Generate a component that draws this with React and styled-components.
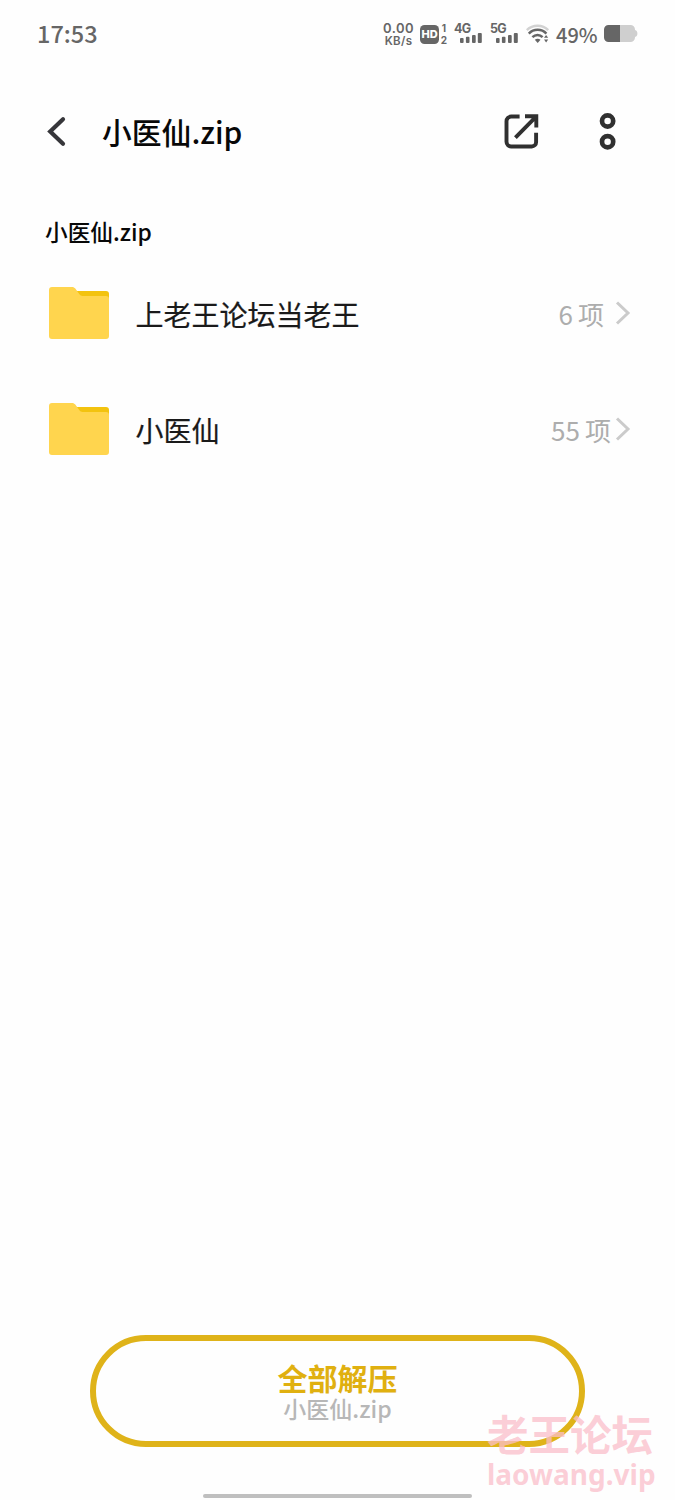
import React from 'react';
import styled, { createGlobalStyle } from 'styled-components';

const entries = [
  { id: 1, name: '上老王论坛当老王', count: 6 },
  { id: 2, name: '小医仙', count: 55 },
];

const BackIcon = () => (
  <svg width="20" height="32" viewBox="0 0 20 32" fill="none">
    <path d="M17 3.2L4.200 15.500 17 27.800" stroke="#36363a" strokeWidth="4.2" strokeLinecap="round" />
  </svg>
);

const OpenIcon = () => (
  <svg width="36" height="36" viewBox="0 0 36 36" fill="none" stroke="#303030" strokeWidth="3.9">
    <path d="M15.6 2.5H7.2A4.7 4.7 0 0 0 2.5 7.2v20.6a4.7 4.7 0 0 0 4.7 4.7h20.6a4.3 4.3 0 0 0 4.3-4.3v-9.4" />
    <path d="M21 2.2h11.3v11.2M31.6 3.2L11.4 23.6" />
  </svg>
);

const MoreIcon = () => (
  <svg width="18" height="38" viewBox="0 0 18 38" fill="none" stroke="#303030" strokeWidth="4.7">
    <circle cx="8.6" cy="8" r="5.6" />
    <circle cx="8.6" cy="28.7" r="5.6" />
  </svg>
);

const FolderIcon = () => (
  <svg width="60" height="52" viewBox="0 0 60 52">
    <path d="M22 4h35a3 3 0 0 1 3 3v8H22z" fill="#f3c30f" />
    <path
      d="M3 0h20c1.500 0 2.400.500 3.300 1.600l4.100 5.600c.8 1.100 1.700 1.700 3.200 1.700H57a3 3 0 0 1 3 3V49a3 3 0 0 1-3 3H3a3 3 0 0 1-3-3V3a3 3 0 0 1 3-3z"
      fill="#ffd54e"
    />
  </svg>
);

const ChevronIcon = () => (
  <svg width="16" height="26" viewBox="0 0 16 26" fill="none">
    <path d="M2 2.5L13 13 2 23.5" stroke="#cbcbcb" strokeWidth="3" />
  </svg>
);

const SignalBars = () => (
  <svg width="22" height="10" viewBox="0 0 22 10" fill="#666">
    <rect x="0" y="5" width="3.6" height="5" rx="1" />
    <rect x="5.9" y="3.7" width="3.6" height="6.3" rx="1" />
    <rect x="12" y="2" width="3.7" height="8" rx="1" />
    <rect x="17.8" y="0" width="4" height="10" rx="1" />
  </svg>
);

const WifiIcon = () => (
  <svg width="24" height="20" viewBox="0 0 24 20" fill="none" strokeWidth="2.5">
    <path d="M.8 6.200C6.800.400 16.500.400 22.200 6.200" stroke="#d2d2d2" />
    <path d="M2.800 9.600c4.900-5 12.800-5 17.600 0M6.400 13.200c3-2.900 7.300-2.900 10.200 0" stroke="#666" />
    <path d="M8.800 15.800c1.700-1.400 4-1.400 5.700 0L11.700 18.900z" fill="#666" />
    <path d="M18 13.800l2.100-2.800 2.100 2.800zM18 15.600l2.100 2.800 2.100-2.800z" fill="#666" />
  </svg>
);

const BatteryIcon = () => (
  <svg width="34" height="18" viewBox="0 0 34 18">
    <path
      d="M16 0h10.500a4.500 4.500 0 0 1 4.500 4.500v.5c1.700.6 2.400 1.700 2.400 3.500s-.7 2.900-2.400 3.500v.5a4.500 4.500 0 0 1-4.500 4.500H16z"
      fill="#cfcfcf"
    />
    <path d="M4.500 0H16v17H4.500A4.500 4.500 0 0 1 0 12.500v-8A4.500 4.500 0 0 1 4.500 0z" fill="#666" />
  </svg>
);

const StatusBar = () => (
  <Status>
    <Clock>17:53</Clock>
    <Speed>
      <span>0.00</span>
      <small>KB/s</small>
    </Speed>
    <HdBadge>HD</HdBadge>
    <SimNumbers>
      <span>1</span>
      <span>2</span>
    </SimNumbers>
    <Network>
      <span>4G</span>
      <SignalBars />
    </Network>
    <Network>
      <span>5G</span>
      <SignalBars />
    </Network>
    <Wifi>
      <WifiIcon />
    </Wifi>
    <Percent>49%</Percent>
    <BatteryIcon />
  </Status>
);

const App = () => (
  <Screen>
    <GlobalStyle />
    <StatusBar />
    <Header>
      <IconButton $width={20}>
        <BackIcon />
      </IconButton>
      <Title>小医仙.zip</Title>
      <IconButton $width={36}>
        <OpenIcon />
      </IconButton>
      <IconButton $width={18}>
        <MoreIcon />
      </IconButton>
    </Header>
    <PathLabel>小医仙.zip</PathLabel>
    <List>
      {entries.map((entry) => (
        <Row key={entry.id}>
          <FolderIcon />
          <Name>{entry.name}</Name>
          <Count $gap={entry.count > 9 ? 4 : 11}>
            <b>{entry.count}</b>
            <span>项</span>
          </Count>
          <ChevronIcon />
        </Row>
      ))}
    </List>
    <ExtractButton>
      <strong>全部解压</strong>
      <span>小医仙.zip</span>
    </ExtractButton>
    <HomeBar />
    <Watermark>
      <strong>老王论坛</strong>
      <span>laowang.vip</span>
    </Watermark>
  </Screen>
);

export default App;

const GlobalStyle = createGlobalStyle`
  * {
    box-sizing: border-box;
  }
  body {
    margin: 0;
    background: #fefefe;
    font-family: 'Noto Sans CJK SC', sans-serif;
  }
  svg {
    display: block;
    flex-shrink: 0;
  }
`;

const Screen = styled.div`
  position: relative;
  width: 675px;
  height: 1500px;
  display: flex;
  flex-direction: column;
  overflow: hidden;
  background: #fefefe;
`;

const Status = styled.div`
  height: 68px;
  display: flex;
  align-items: center;
  padding: 0 37px;
  color: #666;
  font-weight: 500;
`;

const Clock = styled.div`
  flex: 1;
  padding-bottom: 2px;
  font-size: 23.5px;
  line-height: 30px;
`;

const Speed = styled.div`
  width: 33px;
  display: flex;
  flex-direction: column;
  align-items: center;
  font-family: Inter, sans-serif;
  font-size: 13px;
  font-weight: 600;
  line-height: 13px;
  letter-spacing: 0.5px;
  small {
    font-size: 11.5px;
    line-height: 12px;
    letter-spacing: 0.3px;
  }
`;

const HdBadge = styled.div`
  width: 19px;
  height: 19px;
  margin-left: 5px;
  border-radius: 4.5px;
  background: #666;
  color: #fefefe;
  font-family: Inter, sans-serif;
  font-size: 11px;
  font-weight: 800;
  line-height: 19px;
  text-align: center;
`;

const SimNumbers = styled.div`
  width: 8px;
  margin-left: 1px;
  display: flex;
  flex-direction: column;
  align-items: center;
  font-family: Inter, sans-serif;
  font-size: 10px;
  font-weight: 700;
  line-height: 12px;
`;

const Network = styled.div`
  width: 28px;
  height: 19px;
  margin: 0 0 1px 6px;
  display: flex;
  flex-direction: column;
  justify-content: space-between;
  font-family: Inter, sans-serif;
  font-size: 12.5px;
  font-weight: 700;
  line-height: 9px;
  & + & {
    margin-left: 8px;
  }
  span {
    letter-spacing: -0.8px;
  }
  svg {
    align-self: flex-end;
  }
`;

const Wifi = styled.div`
  margin-left: 8px;
`;

const Percent = styled.div`
  width: 43px;
  margin: 0 5px 0 6px;
  padding-top: 2px;
  font-size: 20px;
  line-height: 24px;
`;

const Header = styled.header`
  height: 128px;
  display: flex;
  align-items: center;
  padding: 0 58px 0 46px;
`;

const IconButton = styled.button`
  width: ${(props) => props.$width}px;
  padding: 0;
  border: 0;
  background: none;
`;

const Title = styled.h1`
  flex: 1;
  margin: 0 0 0 36px;
  padding-bottom: 2px;
  color: #080808;
  font-size: 29.8px;
  font-weight: 500;
  line-height: 40px;
  & + ${IconButton} {
    margin-right: 59px;
  }
`;

const PathLabel = styled.h2`
  height: 59px;
  margin: 0;
  padding: 21px 45px 0;
  color: #080808;
  font-size: 22.7px;
  font-weight: 500;
  line-height: 30px;
`;

const List = styled.div`
  flex: 1;
`;

const Row = styled.div`
  height: 116px;
  display: flex;
  align-items: center;
  padding: 0 44px 0 49px;
`;

const Name = styled.div`
  flex: 1;
  margin-left: 26.5px;
  padding-top: 2px;
  color: #1a1a1a;
  font-size: 28px;
  line-height: 40px;
  -webkit-text-stroke: 0.2px #1a1a1a;
`;

const Count = styled.div`
  display: flex;
  align-items: center;
  gap: 5px;
  margin-right: ${(props) => props.$gap}px;
  padding-top: 2px;
  color: #adadad;
  font-size: 26px;
  line-height: 36px;
  b {
    font-weight: 400;
  }
`;

const ExtractButton = styled.button`
  width: 495px;
  height: 112px;
  margin: 0 auto;
  padding: 0;
  display: flex;
  flex-direction: column;
  align-items: center;
  justify-content: center;
  border: 6px solid #dfb319;
  border-radius: 56px;
  background: #fefefe;
  font-family: inherit;
  strong {
    color: #e0b010;
    font-size: 30px;
    font-weight: 700;
    line-height: 33px;
  }
  span {
    color: #b7b7b7;
    font-size: 23px;
    font-weight: 500;
    line-height: 28px;
  }
`;

const HomeBar = styled.div`
  width: 269px;
  height: 4px;
  margin: 47px auto 2px;
  border-radius: 2px;
  background: #bfbfbf;
`;

const Watermark = styled.div`
  position: absolute;
  left: 487px;
  top: 1410px;
  display: flex;
  flex-direction: column;
  color: rgba(250, 190, 202, 0.75);
  strong {
    font-size: 41.5px;
    font-weight: 700;
    line-height: 46px;
  }
  span {
    font-family: 'Noto Sans', sans-serif;
    font-size: 28px;
    font-weight: 700;
    line-height: 36px;
  }
`;
